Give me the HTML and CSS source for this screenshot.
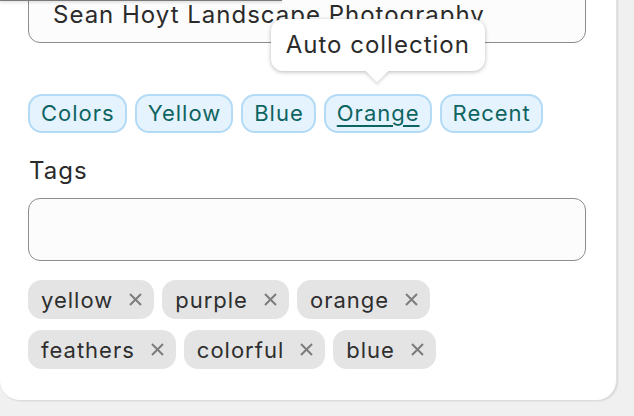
FILE: index.html
```html
<!DOCTYPE html>
<html>
<head>
<meta charset="utf-8">
<link rel="stylesheet" href="styles.css">
</head>
<body>
<div class="top-shadow"></div>
<div class="card">
  <div class="field title-field">Sean Hoyt Landscape Photography</div>
  <div class="auto-row">
    <span class="auto-chip">Colors</span>
    <span class="auto-chip">Yellow</span>
    <span class="auto-chip">Blue</span>
    <span class="auto-chip hovered"><span class="u">Orange</span>
      <span class="tooltip">Auto collection</span>
    </span>
    <span class="auto-chip">Recent</span>
  </div>
  <div class="label">Tags</div>
  <div class="field tags-field"></div>
  <div class="tag-list">
    <span class="tag"><span class="t">yellow</span><svg class="x" viewBox="0 0 15 15"><path d="M2 2L13 13M13 2L2 13"/></svg></span>
    <span class="tag"><span class="t">purple</span><svg class="x" viewBox="0 0 15 15"><path d="M2 2L13 13M13 2L2 13"/></svg></span>
    <span class="tag"><span class="t">orange</span><svg class="x" viewBox="0 0 15 15"><path d="M2 2L13 13M13 2L2 13"/></svg></span>
    <span class="tag"><span class="t">feathers</span><svg class="x" viewBox="0 0 15 15"><path d="M2 2L13 13M13 2L2 13"/></svg></span>
    <span class="tag"><span class="t">colorful</span><svg class="x" viewBox="0 0 15 15"><path d="M2 2L13 13M13 2L2 13"/></svg></span>
    <span class="tag"><span class="t">blue</span><svg class="x" viewBox="0 0 15 15"><path d="M2 2L13 13M13 2L2 13"/></svg></span>
  </div>
</div>
</body>
</html>
```
FILE: styles.css
```css
* { box-sizing: border-box; }
html, body { margin: 0; padding: 0; }
body {
  background: #f0f0f0;
  font-family: Inter, "Noto Sans", sans-serif;
  color: #2b2b2b;
  letter-spacing: 1px;
  width: 634px;
  height: 416px;
  overflow: hidden;
  position: relative;
}
.top-shadow {
  position: absolute;
  left: 0; top: 0;
  width: 282px; height: 1px;
  background: #7a7a7a;
  box-shadow: 0 1px 3px rgba(0,0,0,0.3);
  z-index: 5;
}
.card {
  width: 617px;
  margin-top: -20px;
  background: #fff;
  border-radius: 0 0 20px 20px;
  box-shadow: 1px 1px 2px rgba(0,0,0,0.12);
  border-right: 1px solid #e2e2e2;
  padding: 0 30px 31px 28px;
}
.field {
  width: 558px;
  border: 1px solid #8c8c8c;
  border-radius: 12px;
  background: #fcfcfc;
}
.title-field {
  height: 63px;
  padding: 19px 0 0 24px;
  font-size: 24px;
  line-height: 30px;
  color: #2b2b2b;
}
.auto-row {
  display: flex;
  gap: 8px;
  margin-top: 51px;
}
.auto-chip {
  position: relative;
  height: 39px;
  padding: 0 10px 0 11px;
  border: 2px solid #b4dbf6;
  background: #e5f3fe;
  border-radius: 14px;
  color: #0e6461;
  font-size: 22px;
  line-height: 35px;
}
.auto-chip .u {
  text-decoration: underline;
  text-underline-offset: 4px;
  text-decoration-thickness: 2px;
}
.tooltip {
  position: absolute;
  left: -55px;
  top: -77px;
  width: 214px;
  height: 52px;
  background: #fff;
  border-radius: 12px;
  box-shadow: 0 1px 4px rgba(0,0,0,0.28);
  color: #2b2b2b;
  text-align: center;
  line-height: 52px;
  font-size: 24px;
  display: block;
  z-index: 3;
}
.tooltip::after {
  content: "";
  position: absolute;
  left: 98px;
  bottom: -8px;
  width: 16px;
  height: 16px;
  background: #fff;
  transform: rotate(45deg);
  box-shadow: 2px 2px 3px rgba(0,0,0,0.12);
}
.label {
  margin-top: 23px;
  font-size: 24px;
  line-height: 30px;
  padding-left: 1px;
  color: #2b2b2b;
}
.tags-field {
  height: 63px;
  margin-top: 12px;
}
.tag-list {
  display: flex;
  flex-wrap: wrap;
  gap: 11px 8px;
  margin-top: 19px;
  width: 460px;
}
.tag {
  display: inline-flex;
  align-items: center;
  height: 39px;
  padding: 0 11px 0 13px;
  background: #e4e4e4;
  border-radius: 14px;
  font-size: 22px;
  color: #2e2e2e;
  white-space: nowrap;
}
.tag .x {
  margin-left: 15px;
  width: 15px;
  height: 15px;
  fill: none;
  stroke: #7c7c7c;
  stroke-width: 2;
}
```
